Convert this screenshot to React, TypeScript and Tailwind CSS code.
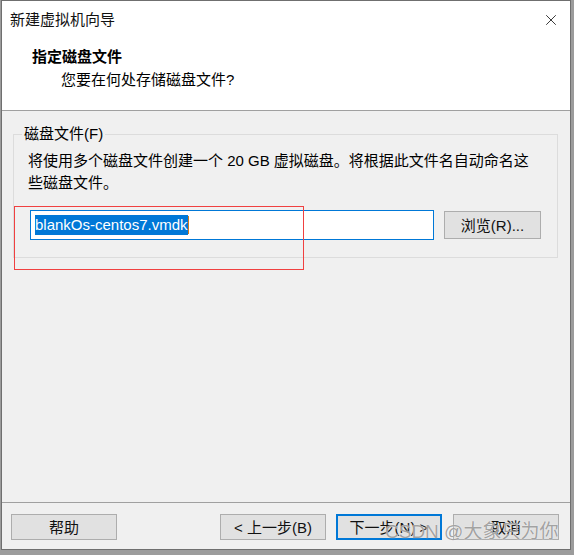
import { X } from 'lucide-react';

const FONT = "font-['Liberation_Sans','Noto_Sans_CJK_SC',sans-serif]";

function Btn({ label, focused, w = 'w-[106px] h-[26px]', className = '' }: { label: string; focused?: boolean; w?: string; className?: string }) {
  return (
    <div
      className={`flex items-center justify-center text-[15px] leading-none text-[#111] bg-[#e1e1e1] ${w} ${
        focused ? 'border-2 border-[#0078d7]' : 'border border-[#adadad]'
      } ${className}`}
    >
      {label}
    </div>
  );
}

export default function App() {
  return (
    <div className={`relative flex h-[555px] w-[574px] bg-[#9c9c9c] ${FONT}`}>
      {/* dialog window */}
      <div className="ml-[1px] flex h-[550px] w-[570px] flex-col border border-[#6f6f6f] bg-[#f0f0f0]">
        {/* header */}
        <div className="h-[110px] border-b border-[#a0a0a0] bg-white">
          <div className="flex items-start justify-between pl-[8px] pr-[10px] pt-[9px]">
            <span className="text-[15px] leading-[20px] text-[#111]">新建虚拟机向导</span>
            <X className="mt-[1px] h-[18px] w-[18px] text-[#111]" strokeWidth={1.1} />
          </div>
          <p className="mt-[17px] pl-[30px] text-[15px] font-bold leading-[20px] text-black">指定磁盘文件</p>
          <p className="mt-[3px] pl-[59px] text-[15px] leading-[20px] text-black">您要在何处存储磁盘文件?</p>
        </div>

        {/* body */}
        <div className="flex-1">
          <div className="relative ml-[11px] mt-[23px] h-[124px] w-[545px] border border-[#dcdcdc]">
            <span className="absolute -top-[11px] left-[8px] bg-[#f0f0f0] px-[2px] text-[15px] leading-[20px] text-black">
              磁盘文件(F)
            </span>
            <div className="pl-[14px] pt-[15px] text-[15px] leading-[22px] text-black">
              <p>将使用多个磁盘文件创建一个 20 GB 虚拟磁盘。将根据此文件名自动命名这</p>
              <p>些磁盘文件。</p>
            </div>
            <div className="mt-[16px] flex items-center pl-[16px]">
              <div className="flex h-[30px] w-[404px] items-center border border-[#0078d7] bg-white pl-[4px]">
                <span className="bg-[#0078d7] text-[15px] leading-[20px] text-white">blankOs-centos7.vmdk</span>
                <span className="h-[18px] w-px bg-[#d07a1c]" />
              </div>
              <Btn label="浏览(R)..." w="w-[97px] h-[28px]" className="ml-[10px]" />
            </div>
          </div>
        </div>

        {/* footer */}
        <div className="flex h-[47px] items-start border-t border-[#a0a0a0] pl-[9px] pr-[11px] pt-[11px]">
          <Btn label="帮助" />
          <div className="flex-1" />
          <Btn label="< 上一步(B)" />
          <Btn label="下一步(N) >" focused className="ml-[10px]" />
          <Btn label="取消" className="ml-[11px]" />
        </div>
      </div>

      {/* red annotation box */}
      <div className="pointer-events-none absolute left-[14px] top-[206px] h-[64px] w-[290px] border border-[#f04040]" />

      {/* watermark */}
      <span className="pointer-events-none absolute left-[385px] top-[519px] whitespace-nowrap text-[19px] leading-[26px] text-[#8a8a8a]/80 [text-shadow:0_0_1px_#fff]">
        CSDN @大象只为你
      </span>
    </div>
  );
}
